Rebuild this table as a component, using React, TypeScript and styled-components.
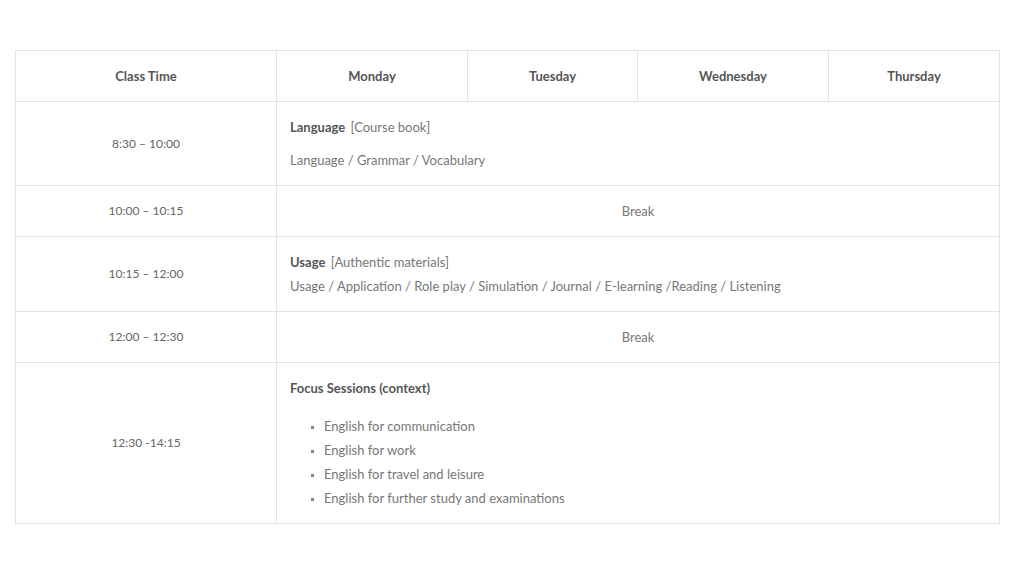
import React from 'react';
import styled, { createGlobalStyle } from 'styled-components';

const GlobalStyle = createGlobalStyle`
  html, body {
    margin: 0;
    padding: 0;
    background: #fff;
  }
  body {
    font-family: Lato, 'Open Sans', sans-serif;
    color: #777;
  }
`;

const Page = styled.div`
  padding: 50px 25px 0 15px;
`;

const Table = styled.table`
  width: 100%;
  border-collapse: collapse;
  table-layout: fixed;
  font-size: 13px;
  line-height: 24px;
`;

interface HeadCellProps {
  $width: number;
}

const HeadCell = styled.th<HeadCellProps>`
  box-sizing: border-box;
  width: ${props => props.$width}px;
  border: 1px solid #e1e1e1;
  padding: 13px;
  font-weight: 700;
  color: #555;
  text-align: center;
`;

const TimeCell = styled.td`
  border: 1px solid #e1e1e1;
  padding: 13px;
  text-align: center;
  vertical-align: middle;
  font-size: 12px;
  color: #666;
`;

interface CellProps {
  $center?: boolean;
}

const Cell = styled.td<CellProps>`
  border: 1px solid #e1e1e1;
  padding: 13px;
  vertical-align: middle;
  text-align: ${props => (props.$center ? 'center' : 'left')};
  color: #777;
`;

const Title = styled.strong`
  font-weight: 700;
  color: #555;
  margin-right: 2px;
`;

interface LineProps {
  $gap?: number;
}

const Line = styled.div<LineProps>`
  margin-top: ${props => props.$gap || 0}px;
`;

const Topics = styled.ul`
  margin: 14px 0 0;
  padding-left: 34px;
  list-style: square;

  li::marker {
    color: #888;
    font-size: 9px;
  }
`;

const columns = [
  { label: 'Class Time', width: 261 },
  { label: 'Monday', width: 191 },
  { label: 'Tuesday', width: 170 },
  { label: 'Wednesday', width: 191 },
  { label: 'Thursday', width: 171 },
];

const focusTopics = [
  'English for communication',
  'English for work',
  'English for travel and leisure',
  'English for further study and examinations',
];

export default function App() {
  return (
    <Page>
      <GlobalStyle />
      <Table>
        <thead>
          <tr>
            {columns.map(col => (
              <HeadCell key={col.label} $width={col.width}>
                {col.label}
              </HeadCell>
            ))}
          </tr>
        </thead>
        <tbody>
          <tr>
            <TimeCell>8:30 – 10:00</TimeCell>
            <Cell colSpan={4}>
              <Line>
                <Title>Language</Title> [Course book]
              </Line>
              <Line $gap={9}>Language / Grammar / Vocabulary</Line>
            </Cell>
          </tr>
          <tr>
            <TimeCell>10:00 – 10:15</TimeCell>
            <Cell colSpan={4} $center>
              Break
            </Cell>
          </tr>
          <tr>
            <TimeCell>10:15 – 12:00</TimeCell>
            <Cell colSpan={4}>
              <Line>
                <Title>Usage</Title> [Authentic materials]
              </Line>
              <Line>
                Usage / Application / Role play / Simulation / Journal / E-learning /Reading / Listening
              </Line>
            </Cell>
          </tr>
          <tr>
            <TimeCell>12:00 – 12:30</TimeCell>
            <Cell colSpan={4} $center>
              Break
            </Cell>
          </tr>
          <tr>
            <TimeCell>12:30 -14:15</TimeCell>
            <Cell colSpan={4}>
              <Line>
                <Title>Focus Sessions (context)</Title>
              </Line>
              <Topics>
                {focusTopics.map(topic => (
                  <li key={topic}>{topic}</li>
                ))}
              </Topics>
            </Cell>
          </tr>
        </tbody>
      </Table>
    </Page>
  );
}
